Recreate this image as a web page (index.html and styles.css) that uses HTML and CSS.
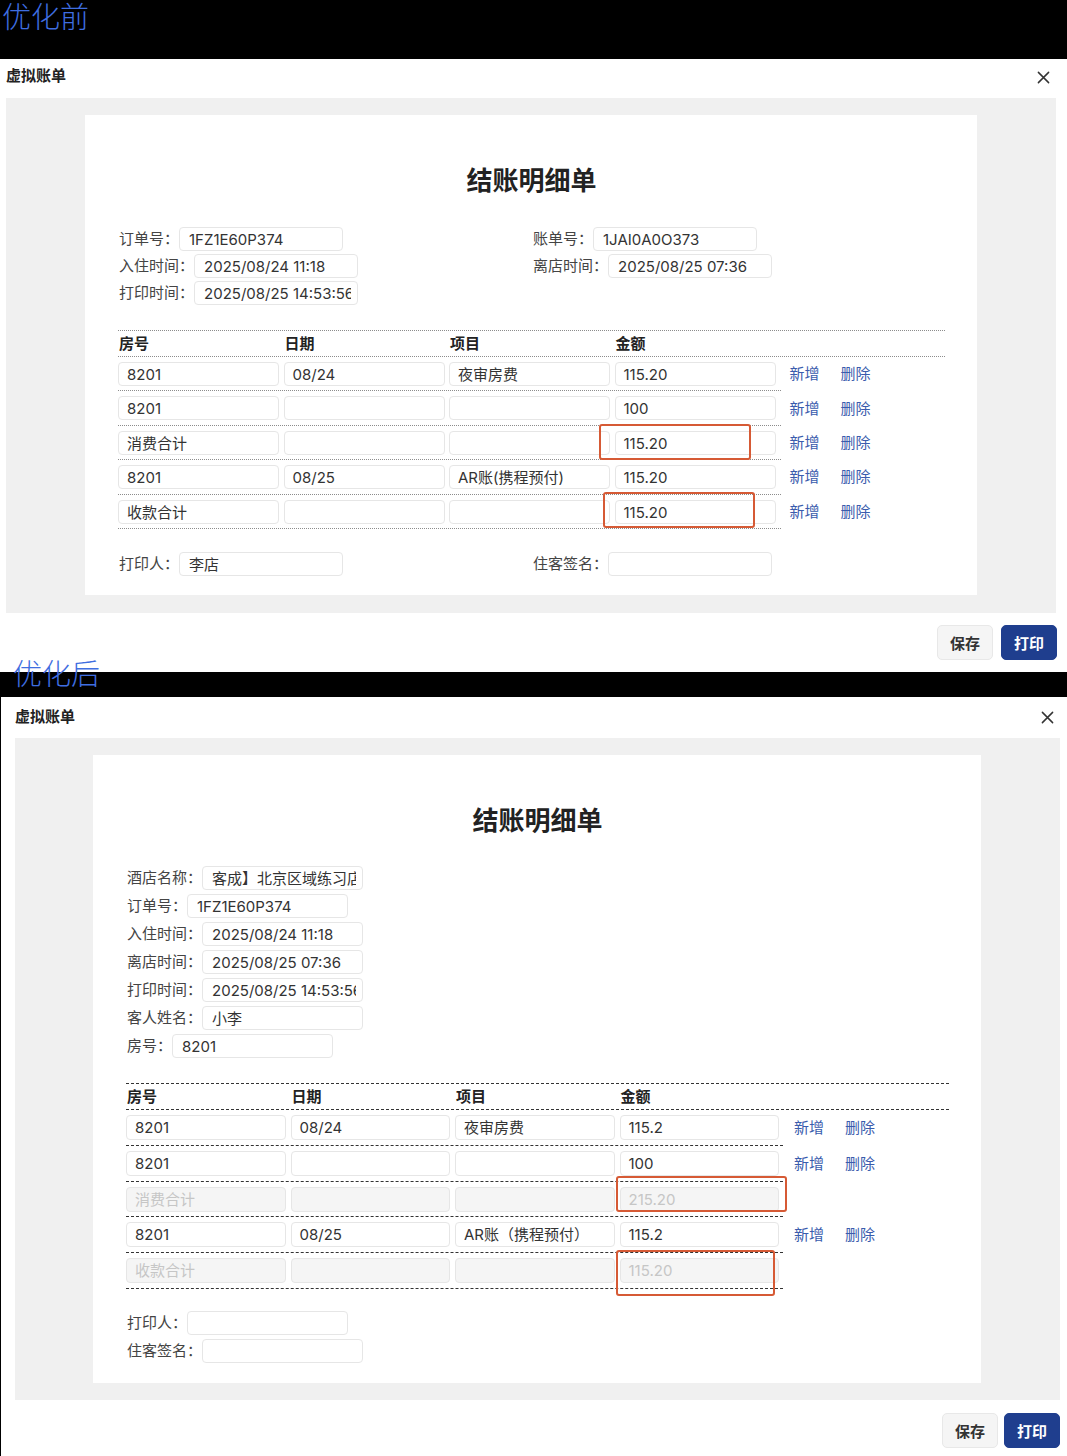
FILE: index.html
```html
<!DOCTYPE html>
<html lang="zh-CN">
<head>
<meta charset="utf-8">
<title>虚拟账单 优化前后</title>
<link rel="stylesheet" href="styles.css">
</head>
<body>
<div class="band band-top"><span class="tag">优化前</span></div>

<section class="dialog d1">
  <header class="dlg-head">
    <span class="dlg-title">虚拟账单</span>
    <svg class="close" viewBox="0 0 14 14"><path d="M1.5 1.5 L12.5 12.5 M12.5 1.5 L1.5 12.5" /></svg>
  </header>
  <div class="panel">
    <div class="paper">
      <h1 class="bill-title">结账明细单</h1>
      <div class="fields two-col">
        <div class="field"><span class="lbl">订单号：</span><span class="inp">1FZ1E60P374</span></div>
        <div class="field"><span class="lbl">账单号：</span><span class="inp">1JAI0A0O373</span></div>
        <div class="field"><span class="lbl">入住时间：</span><span class="inp">2025/08/24 11:18</span></div>
        <div class="field"><span class="lbl">离店时间：</span><span class="inp">2025/08/25 07:36</span></div>
        <div class="field"><span class="lbl">打印时间：</span><span class="inp"><span class="clip">2025/08/25 14:53:56</span></span></div>
      </div>
      <div class="table">
        <div class="thead"><span>房号</span><span>日期</span><span>项目</span><span>金额</span></div>
        <div class="trow">
          <div class="cells"><span class="inp">8201</span><span class="inp">08/24</span><span class="inp">夜审房费</span><span class="inp">115.20</span></div>
          <div class="acts"><a>新增</a><a>删除</a></div>
        </div>
        <div class="trow">
          <div class="cells"><span class="inp">8201</span><span class="inp"></span><span class="inp"></span><span class="inp">100</span></div>
          <div class="acts"><a>新增</a><a>删除</a></div>
        </div>
        <div class="trow">
          <div class="cells"><span class="inp">消费合计</span><span class="inp"></span><span class="inp"></span><span class="inp">115.20</span></div>
          <div class="acts"><a>新增</a><a>删除</a></div>
          <span class="mark mark-a"></span>
        </div>
        <div class="trow">
          <div class="cells"><span class="inp">8201</span><span class="inp">08/25</span><span class="inp">AR账(携程预付)</span><span class="inp">115.20</span></div>
          <div class="acts"><a>新增</a><a>删除</a></div>
        </div>
        <div class="trow">
          <div class="cells"><span class="inp">收款合计</span><span class="inp"></span><span class="inp"></span><span class="inp">115.20</span></div>
          <div class="acts"><a>新增</a><a>删除</a></div>
          <span class="mark mark-b"></span>
        </div>
      </div>
      <div class="fields two-col sign">
        <div class="field"><span class="lbl">打印人：</span><span class="inp">李店</span></div>
        <div class="field"><span class="lbl">住客签名：</span><span class="inp"></span></div>
      </div>
    </div>
  </div>
  <footer class="dlg-foot">
    <button class="btn">保存</button>
    <button class="btn primary">打印</button>
  </footer>
</section>

<div class="band band-mid"><span class="tag">优化后</span></div>

<section class="dialog d2">
  <header class="dlg-head">
    <span class="dlg-title">虚拟账单</span>
    <svg class="close" viewBox="0 0 14 14"><path d="M1.5 1.5 L12.5 12.5 M12.5 1.5 L1.5 12.5" /></svg>
  </header>
  <div class="panel">
    <div class="paper">
      <h1 class="bill-title">结账明细单</h1>
      <div class="fields one-col">
        <div class="field"><span class="lbl">酒店名称：</span><span class="inp"><span class="clip">客成】北京区域练习店</span></span></div>
        <div class="field"><span class="lbl">订单号：</span><span class="inp">1FZ1E60P374</span></div>
        <div class="field"><span class="lbl">入住时间：</span><span class="inp">2025/08/24 11:18</span></div>
        <div class="field"><span class="lbl">离店时间：</span><span class="inp">2025/08/25 07:36</span></div>
        <div class="field"><span class="lbl">打印时间：</span><span class="inp"><span class="clip">2025/08/25 14:53:56</span></span></div>
        <div class="field"><span class="lbl">客人姓名：</span><span class="inp">小李</span></div>
        <div class="field"><span class="lbl">房号：</span><span class="inp">8201</span></div>
      </div>
      <div class="table">
        <div class="thead"><span>房号</span><span>日期</span><span>项目</span><span>金额</span></div>
        <div class="trow">
          <div class="cells"><span class="inp">8201</span><span class="inp">08/24</span><span class="inp">夜审房费</span><span class="inp">115.2</span></div>
          <div class="acts"><a>新增</a><a>删除</a></div>
        </div>
        <div class="trow">
          <div class="cells"><span class="inp">8201</span><span class="inp"></span><span class="inp"></span><span class="inp">100</span></div>
          <div class="acts"><a>新增</a><a>删除</a></div>
        </div>
        <div class="trow">
          <div class="cells"><span class="inp off">消费合计</span><span class="inp off"></span><span class="inp off"></span><span class="inp off">215.20</span></div>
          <span class="mark mark-c"></span>
        </div>
        <div class="trow">
          <div class="cells"><span class="inp">8201</span><span class="inp">08/25</span><span class="inp">AR账（携程预付）</span><span class="inp">115.2</span></div>
          <div class="acts"><a>新增</a><a>删除</a></div>
        </div>
        <div class="trow">
          <div class="cells"><span class="inp off">收款合计</span><span class="inp off"></span><span class="inp off"></span><span class="inp off">115.20</span></div>
          <span class="mark mark-d"></span>
        </div>
      </div>
      <div class="fields one-col sign">
        <div class="field"><span class="lbl">打印人：</span><span class="inp"></span></div>
        <div class="field"><span class="lbl">住客签名：</span><span class="inp"></span></div>
      </div>
    </div>
  </div>
  <footer class="dlg-foot">
    <button class="btn">保存</button>
    <button class="btn primary">打印</button>
  </footer>
</section>
</body>
</html>
```

FILE: styles.css
```css
* { box-sizing: border-box; }

body {
  margin: 0;
  width: 1067px;
  background: #fff;
  color: #333;
  font-family: Inter, "Noto Sans CJK SC", sans-serif;
  font-size: 15px;
}

/* black label bands */
.band {
  position: relative;
  background: #000;
}
.band .tag {
  font-family: "Noto Sans CJK SC", sans-serif;
  font-size: 29px;
  line-height: 31px;
  font-weight: 300;
  color: #3f6ee0;
  white-space: nowrap;
}
.band-top { height: 59px; }
.band-top .tag { display: block; padding-left: 2px; }
.band-mid { height: 25px; }
.band-mid .tag {
  position: absolute;
  left: 13px;
  top: -15px;
}

/* dialogs */
.dialog { background: #fff; }
.d2 { border-left: 1px solid #000; }

.dlg-head {
  display: flex;
  justify-content: space-between;
  align-items: flex-start;
}
.dlg-title {
  font-family: "Noto Sans CJK SC", sans-serif;
  font-weight: 700;
  font-size: 15px;
  line-height: 20px;
  color: #222;
}
.close {
  width: 13px;
  height: 13px;
  fill: none;
  stroke: #333;
  stroke-width: 1.6;
  stroke-linecap: round;
}

.d1 .dlg-head { height: 39px; padding: 0 17px 0 6px; }
.d1 .dlg-title { margin-top: 6px; }
.d1 .close { margin-top: 12px; }

.d2 .dlg-head { height: 41px; padding: 0 13px 0 14px; }
.d2 .dlg-title { margin-top: 9px; }
.d2 .close { margin-top: 14px; }

.panel { background: #f0f0f0; }
.d1 .panel { margin: 0 11px 0 6px; padding: 17px 79px 18px 79px; }
.d2 .panel { margin: 0 7px 0 14px; padding: 17px 79px 17px 78px; }

.paper {
  background: #fff;
  padding: 46px 32px 19px 33px;
}
.d2 .paper { padding-bottom: 20px; }

.bill-title {
  margin: 0;
  text-align: center;
  font-family: "Noto Sans CJK SC", sans-serif;
  font-size: 26px;
  line-height: 36px;
  font-weight: 700;
  color: #222;
}

/* header fields */
.fields {
  display: grid;
  padding-left: 1px;
}
.two-col {
  grid-template-columns: 414px 1fr;
  row-gap: 3px;
  margin-top: 30px;
}
.one-col {
  grid-template-columns: 1fr;
  row-gap: 4px;
  margin-top: 29px;
}
.field {
  display: flex;
  align-items: center;
  height: 24px;
}
.lbl {
  font-family: "Noto Sans CJK SC", sans-serif;
  font-size: 15px;
  line-height: 22px;
  padding-bottom: 2px;
  color: #444;
  white-space: nowrap;
}
.inp {
  display: block;
  flex: none;
  height: 24px;
  width: 164px;
  border: 1px solid #e6e6e6;
  border-radius: 4px;
  background: #fff;
  padding: 0 6px 0 9px;
  font-size: 15px;
  line-height: 23px;
  color: #333;
  white-space: nowrap;
  overflow: hidden;
}
.clip {
  display: block;
  overflow: hidden;
  white-space: nowrap;
}
.d2 .field .inp { width: 161px; }
.inp.off {
  background: #f5f5f5;
  color: #c6c6c6;
}

/* table */
.table { margin-top: 25px; }
.thead {
  display: flex;
  gap: 4.5px;
  align-items: center;
  height: 27px;
  padding-bottom: 2px;
  font-family: "Noto Sans CJK SC", sans-serif;
  font-weight: 700;
  font-size: 15px;
  color: #222;
}
.thead span { width: 161px; padding-left: 1px; }
.d1 .thead { border-top: 1px dotted #8c8c8c; border-bottom: 1px dotted #8c8c8c; }
.d2 .thead { border-top: 1px dashed #333; border-bottom: 1px dashed #333; gap: 5px; }
.d2 .thead span { width: 159.5px; }

.trow {
  position: relative;
  display: flex;
  align-items: center;
}
.cells {
  display: flex;
  gap: 4.5px;
  padding: 5px 5px 4.4px 0;
}
.cells .inp { width: 161px; padding-left: 8px; }
.d1 .cells { border-bottom: 1px dotted #8c8c8c; }
.d2 .cells {
  gap: 5px;
  padding: 5px 4px 4.8px 0;
  border-bottom: 1px dashed #333;
}
.d2 .cells .inp { width: 159.5px; height: 25px; line-height: 24px; }

.acts {
  display: flex;
  gap: 21px;
  font-family: "Noto Sans CJK SC", sans-serif;
  font-size: 15px;
  line-height: 20px;
  padding-bottom: 2px;
}
.d1 .acts { margin-left: 9px; }
.d2 .acts { margin-left: 11px; }
.acts a { color: #3a5cad; text-decoration: none; }

/* red annotation boxes */
.mark {
  position: absolute;
  border: 2px solid #d65a35;
  border-radius: 3px;
  pointer-events: none;
}
.mark-a { left: 481px; top: -2px; width: 152px; height: 36px; }
.mark-b { left: 485px; top: -3px; width: 152px; height: 36px; }
.mark-c { left: 490px; top: -6px; width: 171px; height: 36px; }
.mark-d { left: 490px; top: -3px; width: 159px; height: 46px; }

/* signature rows */
.sign { margin-top: 23px; }
.d2 .sign { margin-top: 22px; }

/* footer */
.dlg-foot {
  display: flex;
  justify-content: flex-end;
  gap: 8px;
}
.d1 .dlg-foot { height: 59px; padding: 12px 10px 0 0; }
.d2 .dlg-foot { height: 56px; padding: 13px 7px 0 0; gap: 6px; }

.btn {
  height: 35px;
  padding: 0 12px;
  border-radius: 5px;
  border: 1px solid #e8e8e8;
  background: #f5f5f5;
  color: #333;
  font-family: "Noto Sans CJK SC", sans-serif;
  font-size: 15px;
  font-weight: 700;
}
.btn.primary {
  background: #1f3e8e;
  border-color: #1f3e8e;
  color: #fff;
}
```
